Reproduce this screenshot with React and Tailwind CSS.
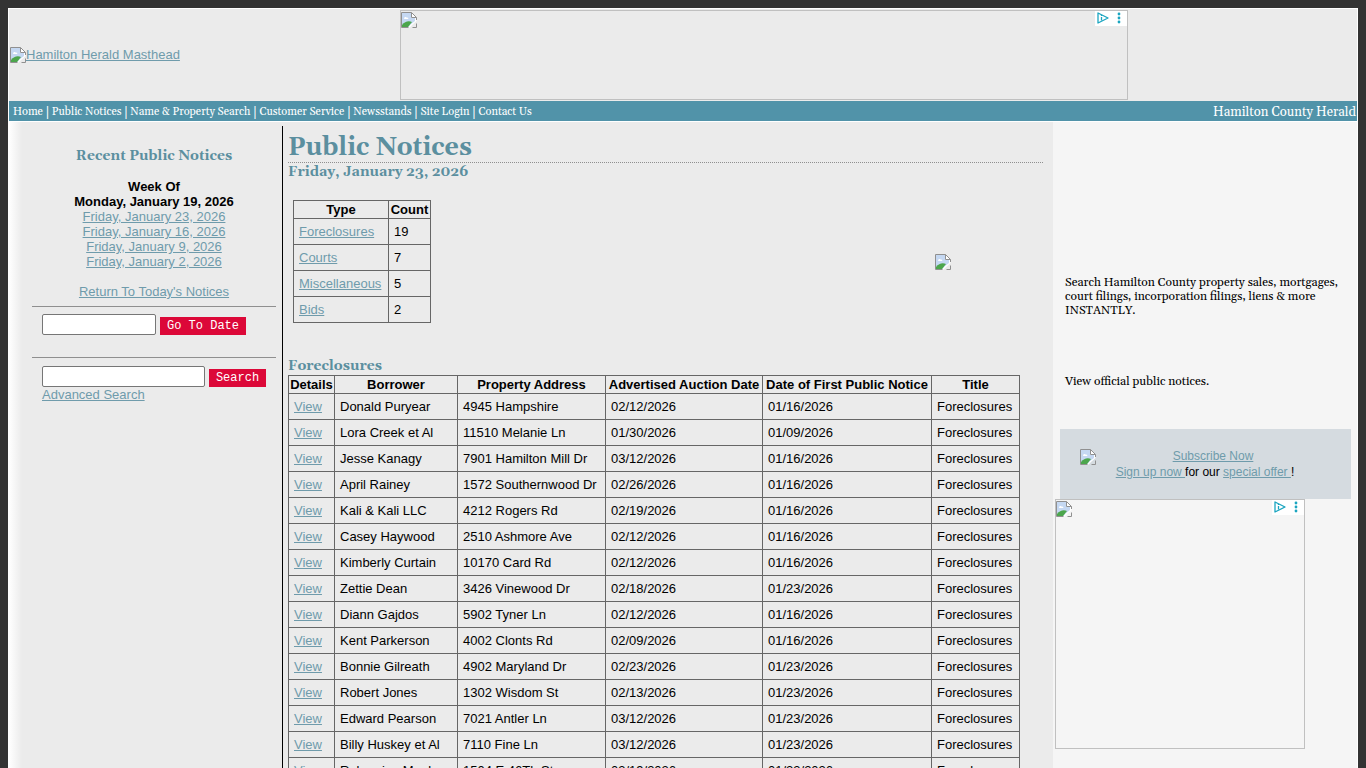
import React from 'react';

const navItems = ['Home', 'Public Notices', 'Name & Property Search', 'Customer Service', 'Newsstands', 'Site Login', 'Contact Us'];
const recent = ['Friday, January 23, 2026', 'Friday, January 16, 2026', 'Friday, January 9, 2026', 'Friday, January 2, 2026'];
const counts = [['Foreclosures', 19], ['Courts', 7], ['Miscellaneous', 5], ['Bids', 2]];
const notices = [
  ['Donald Puryear', '4945 Hampshire', '02/12/2026', '01/16/2026'],
  ['Lora Creek et Al', '11510 Melanie Ln', '01/30/2026', '01/09/2026'],
  ['Jesse Kanagy', '7901 Hamilton Mill Dr', '03/12/2026', '01/16/2026'],
  ['April Rainey', '1572 Southernwood Dr', '02/26/2026', '01/16/2026'],
  ['Kali & Kali LLC', '4212 Rogers Rd', '02/19/2026', '01/16/2026'],
  ['Casey Haywood', '2510 Ashmore Ave', '02/12/2026', '01/16/2026'],
  ['Kimberly Curtain', '10170 Card Rd', '02/12/2026', '01/16/2026'],
  ['Zettie Dean', '3426 Vinewood Dr', '02/18/2026', '01/23/2026'],
  ['Diann Gajdos', '5902 Tyner Ln', '02/12/2026', '01/16/2026'],
  ['Kent Parkerson', '4002 Clonts Rd', '02/09/2026', '01/16/2026'],
  ['Bonnie Gilreath', '4902 Maryland Dr', '02/23/2026', '01/23/2026'],
  ['Robert Jones', '1302 Wisdom St', '02/13/2026', '01/23/2026'],
  ['Edward Pearson', '7021 Antler Ln', '03/12/2026', '01/23/2026'],
  ['Billy Huskey et Al', '7110 Fine Ln', '03/12/2026', '01/23/2026'],
  ['Robersine Meeks', '1504 E 46Th St', '03/19/2026', '01/23/2026'],
];
const columns = [
  ['Details', 'w-[46px]'],
  ['Borrower', 'w-[123px]'],
  ['Property Address', 'w-[148px]'],
  ['Advertised Auction Date', 'w-[157px]'],
  ['Date of First Public Notice', 'w-[169px]'],
  ['Title', 'w-[88px]'],
];

function BrokenImage() {
  return (
    <svg width="16" height="16" viewBox="0 0 16 16" className="inline-block shrink-0" aria-hidden="true">
      <path d="M.5 .5H10.5L15.5 5.5V9L11 13L8.5 15.5H.5Z" fill="#fff" />
      <path d="M1 1H10V6H14V9L9 13L7.500 15H1Z" fill="#c5d8f2" />
      <path d="M3 6.500C3 5 5 4.500 5.500 5.500C7 5 8 6.500 7 7H3.500Z" fill="#fff" />
      <path d="M1 15V13C4 9 8 8.500 11 10L7 15Z" fill="#4ca64c" />
      <path d="M.5 15.500V.5H10.500L15.500 5.500V8M10.500 .5V5.500H15.500M.5 15.500H7.500M11.500 15.500H15.500V11.500" fill="none" stroke="#909090" />
    </svg>
  );
}

function AdFrame({ className }) {
  return (
    <div className={`flex items-start justify-between border border-[#c0c0c0] ${className}`}>
      <div className="flex pt-px"><BrokenImage /></div>
      <div className="flex h-[15px] w-8 items-center gap-1 bg-white">
        <svg width="15" height="15" viewBox="0 0 15 15" fill="none" stroke="#1aa5c0" aria-hidden="true">
          <path d="M3 2L13 7L3 12Z" strokeWidth="1.300" strokeLinejoin="round" />
          <path d="M6.500 6V9.500M6.500 4V5" strokeWidth="1.300" />
        </svg>
        <svg width="10" height="15" viewBox="0 0 10 15" fill="#1aa5c0" aria-hidden="true">
          <circle cx="5" cy="3" r="1.400" /><circle cx="5" cy="7" r="1.400" /><circle cx="5" cy="11" r="1.400" />
        </svg>
      </div>
    </div>
  );
}

const Link = ({ children }) => <a href="#" className="text-[#6f9bab] underline">{children}</a>;

export default function App() {
  return (
    <div className="min-h-screen bg-[#333] px-2 pt-2 font-['Liberation_Sans',Arial,sans-serif] text-[13px] leading-[15px] text-black">
      <div className="flex flex-col border border-b-0 border-white bg-[#f5f5f5]">
        <header className="flex h-[92px] bg-[#ebebeb] pt-px">
          <a href="#" className="ml-px flex flex-[390] items-center pb-0.5 text-[#6f9bab] underline">
            <BrokenImage />Hamilton Herald Masthead
          </a>
          <AdFrame className="h-[90px] w-[728px]" />
          <div className="flex-[229]" />
        </header>
        <nav className="flex h-5 items-center justify-between bg-[#5193a9] pt-0.5 pr-px pl-1 font-[Georgia,Gelasio,serif] text-[11px] text-white">
          <div className="flex items-center">
            {navItems.map((item, i) => (
              <React.Fragment key={item}>
                {i > 0 && <span className="mx-0.5 text-[13px]">|</span>}
                <a href="#">{item}</a>
              </React.Fragment>
            ))}
          </div>
          <span className="text-[13px]">Hamilton County Herald</span>
        </nav>
        <div className="flex flex-1 border-t border-white">
          <div className="w-[13px] shrink-0 bg-linear-to-r from-white to-[#ebebeb]" />
          <aside className="w-[260px] shrink-0 bg-[#ebebeb] pt-6 pr-[6px] pl-[10px]">
            <div className="text-center">
              <h2 className="font-[Georgia,Gelasio,serif] text-[14px] leading-5 font-bold text-[#5b8f9f]">Recent Public Notices</h2>
              <div className="mt-[13px] font-bold">Week Of<br />Monday, January 19, 2026</div>
              {recent.map((d) => <div key={d}><Link>{d}</Link></div>)}
              <div className="mt-[15px]"><Link>Return To Today's Notices</Link></div>
            </div>
            <form className="mt-[7px] flex h-[51px] items-start gap-1 border-t border-[#8f8f8f] px-[10px] pt-[7px]">
              <input aria-label="Date" className="h-[21px] w-[114px] rounded-[2px] border border-[#767676] bg-white px-1" />
              <button type="button" className="mt-[3px] h-[18px] w-[86px] bg-[#dc0838] font-[Courier,'Courier_New','Liberation_Mono',monospace] text-[12px] text-white">Go To Date</button>
            </form>
            <form className="flex items-start gap-1 border-t border-[#8f8f8f] px-[10px] pt-2">
              <input aria-label="Search" className="h-[21px] w-[163px] rounded-[2px] border border-[#767676] bg-white px-1" />
              <button type="button" className="mt-[3px] h-[18px] w-[57px] bg-[#dc0838] font-[Courier,'Courier_New','Liberation_Mono',monospace] text-[12px] text-white">Search</button>
            </form>
            <div className="px-[10px]"><Link>Advanced Search</Link></div>
          </aside>
          <div className="flex min-w-0 flex-1 bg-[#ebebeb] pt-1">
            <main className="min-w-0 flex-1 border-l border-black pr-[10px] pl-[5px]">
              <h1 className="border-b border-dotted border-[#8f8f8f] pt-2 font-[Georgia,Gelasio,serif] text-[25px] leading-7 font-bold text-[#5b8f9f]">Public Notices</h1>
              <h2 className="font-[Georgia,Gelasio,serif] text-[14px] leading-[18px] font-bold text-[#5b8f9f]">Friday, January 23, 2026</h2>
              <div className="mt-[19px] flex items-center justify-between pr-[92px] pl-[5px]">
                <table className="border-collapse">
                  <thead>
                    <tr>
                      <th className="w-[95px] border border-[#666] p-px">Type</th>
                      <th className="w-[42px] border border-[#666] p-px">Count</th>
                    </tr>
                  </thead>
                  <tbody>
                    {counts.map(([type, n]) => (
                      <tr key={type}>
                        <td className="border border-[#666] p-[5px]"><Link>{type}</Link></td>
                        <td className="border border-[#666] p-[5px]">{n}</td>
                      </tr>
                    ))}
                  </tbody>
                </table>
                <BrokenImage />
              </div>
              <h2 className="mt-[34px] font-[Georgia,Gelasio,serif] text-[14px] leading-[18px] font-bold text-[#5b8f9f]">Foreclosures</h2>
              <table className="border-collapse whitespace-nowrap">
                <thead>
                  <tr>
                    {columns.map(([name, width]) => (
                      <th key={name} className={`border border-[#666] p-px ${width}`}>{name}</th>
                    ))}
                  </tr>
                </thead>
                <tbody>
                  {notices.map((row) => (
                    <tr key={row[0]}>
                      <td className="border border-[#666] p-[5px]"><Link>View</Link></td>
                      {row.map((cell, i) => <td key={i} className="border border-[#666] p-[5px]">{cell}</td>)}
                      <td className="border border-[#666] p-[5px]">Foreclosures</td>
                    </tr>
                  ))}
                </tbody>
              </table>
            </main>
          </div>
          <aside className="w-[304px] shrink-0 pt-[154px]">
            <div className="px-3 font-[Georgia,Gelasio,serif] text-[12px] leading-[14px]">
              <p>Search Hamilton County property sales, mortgages, court filings, incorporation filings, liens &amp; more INSTANTLY.</p>
              <p className="mt-[57px]">View official public notices.</p>
            </div>
            <div className="mt-[40px] mr-[6px] ml-[7px] flex h-[70px] items-start bg-[#d5dbe0] pt-[19px] pr-[37px] pl-5 text-[12px] leading-4">
              <div><BrokenImage /></div>
              <div className="flex-1 text-center">
                <div className="pl-4"><Link>Subscribe Now</Link></div>
                <Link>Sign up now </Link>for our <Link>special offer </Link>!
              </div>
            </div>
            <AdFrame className="ml-0.5 h-[250px] w-[250px]" />
          </aside>
        </div>
      </div>
    </div>
  );
}
